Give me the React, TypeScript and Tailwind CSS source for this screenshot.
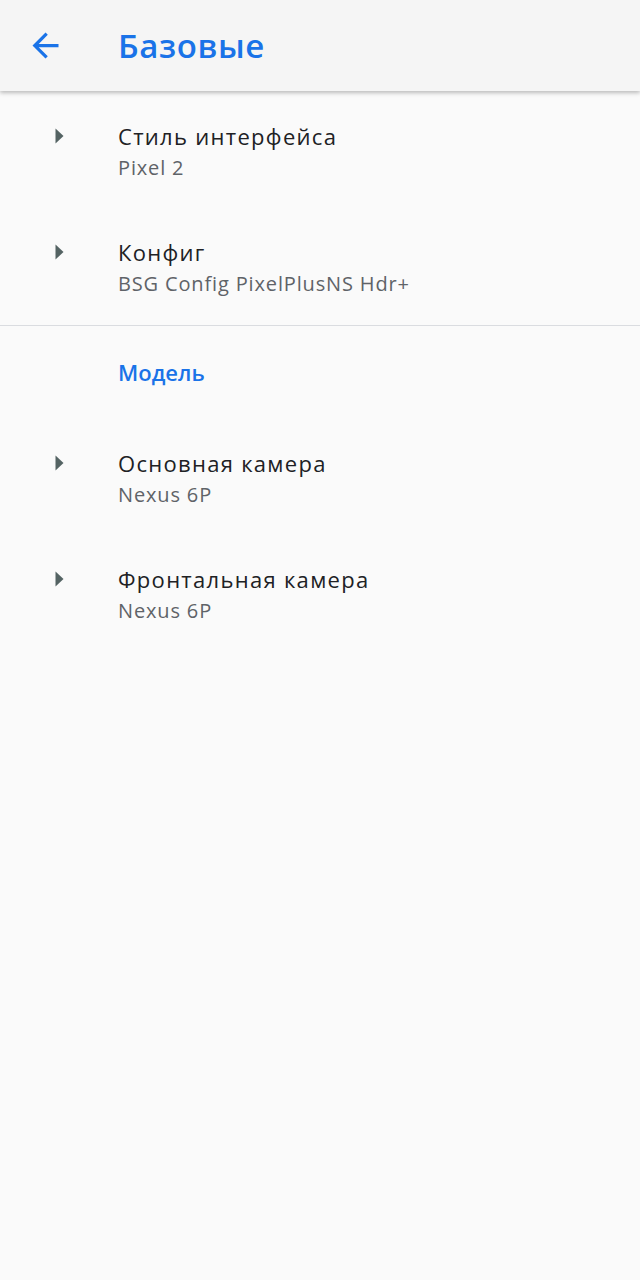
import React from "react";

const font = { fontFamily: "'Open Sans', Roboto, sans-serif" };

function Arrow() {
  return (
    <svg width="9" height="16" viewBox="0 0 9 16" className="shrink-0">
      <path d="M0.5 0.5 L8.5 8 L0.5 15.5 Z" fill="#546363" />
    </svg>
  );
}

function Row({ title, sub }: { title: string; sub: string }) {
  return (
    <div className="flex h-[116px] items-center">
      <div className="w-[118px] self-stretch flex flex-col justify-center pl-[55px]">
        <div className="h-[30px] flex items-center">
          <Arrow />
        </div>
        <div className="h-[30px]" />
      </div>
      <div className="flex flex-col">
        <div className="text-[22px] leading-[30px] text-[#202124] tracking-[1.3px]">{title}</div>
        <div className="text-[20px] leading-[26px] text-[#5f6368] mt-[4px] tracking-[0.85px]">{sub}</div>
      </div>
    </div>
  );
}

export default function App() {
  return (
    <div className="w-[640px] h-[1280px] bg-[#fafafa] flex flex-col" style={font}>
      <div className="h-[91px] bg-[#f5f5f5] flex items-center shadow-[0_2px_4px_rgba(0,0,0,0.25)] relative z-10">
        <div className="w-[118px] pl-[26px] flex items-center">
          <svg width="39" height="39" viewBox="0 0 24 24">
            <path d="M20 11H7.83l5.59-5.59L12 4l-8 8 8 8 1.41-1.41L7.83 13H20v-2z" fill="#1a73e8" />
          </svg>
        </div>
        <div className="text-[33px] font-semibold text-[#1a73e8] tracking-[0.6px]">Базовые</div>
      </div>
      <div className="h-[2px]" />
      <Row title="Стиль интерфейса" sub="Pixel 2" />
      <Row title="Конфиг" sub="BSG Config PixelPlusNS Hdr+" />
      <div className="h-px bg-[#dadce0]" />
      <div className="h-[94px] pl-[118px] pt-[32px]">
        <div className="text-[22px] leading-[28px] font-semibold text-[#1a73e8]">Модель</div>
      </div>
      <Row title="Основная камера" sub="Nexus 6P" />
      <Row title="Фронтальная камера" sub="Nexus 6P" />
    </div>
  );
}
